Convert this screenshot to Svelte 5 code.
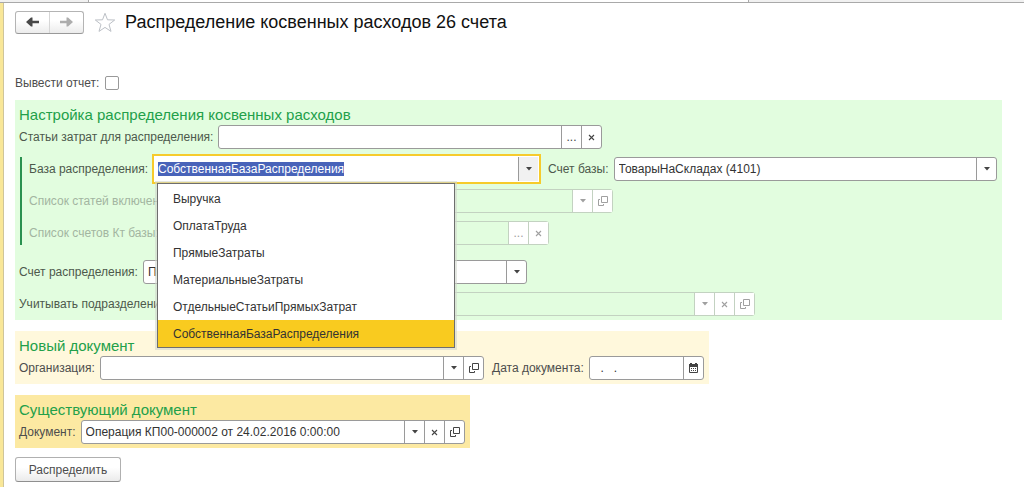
<script lang="ts">
  import { onMount } from "svelte";

  const bases: string[] = [
    "Выручка",
    "ОплатаТруда",
    "ПрямыеЗатраты",
    "МатериальныеЗатраты",
    "ОтдельныеСтатьиПрямыхЗатрат",
    "СобственнаяБазаРаспределения",
  ];

  let base = bases[5];
  let open = true;
  let showReport = false;
  let baseInput: HTMLInputElement;

  onMount(() => {
    baseInput.focus();
    baseInput.select();
  });

  function pick(value: string) {
    base = value;
    open = false;
  }
</script>

{#snippet arrow()}
  <svg width="6" height="4" viewBox="0 0 6 4"><path d="M0 0h6L3 3.5z" fill="currentColor" /></svg>
{/snippet}

{#snippet cross()}
  <svg width="7" height="7" viewBox="0 0 7 7">
    <path d="M1 1l5 5M6 1l-5 5" fill="none" stroke="currentColor" stroke-width="1.1" />
  </svg>
{/snippet}

{#snippet openIcon()}
  <svg width="10" height="10" viewBox="0 0 10 10">
    <path d="M3.5 0.5h6v6h-6zM2 3.5H0.5v6h5V8" fill="none" stroke="currentColor" />
  </svg>
{/snippet}

{#snippet button(kind: string, label: string, disabled = false)}
  <button type="button" class="side" aria-label={label} {disabled}>
    {#if kind === "arrow"}
      {@render arrow()}
    {:else if kind === "clear"}
      {@render cross()}
    {:else if kind === "open"}
      {@render openIcon()}
    {:else if kind === "calendar"}
      <svg width="9" height="10" viewBox="0 0 9 10">
        <path d="M0.5 1.5h8v8h-8z" fill="#fff" stroke="currentColor" />
        <path
          d="M0 1h9v3H0zM1 0h2v1H1zM6 0h2v1H6zM2 5h1v1H2zM4 5h1v1H4zM6 5h1v1H6zM2 7h1v1H2zM4 7h1v1H4zM6 7h1v1H6z"
          fill="currentColor"
        />
      </svg>
    {:else}
      ...
    {/if}
  </button>
{/snippet}

<div class="tabs">
  <span class="tab first"></span>
  <span class="tab current"></span>
  <span class="tab last"></span>
</div>

<main>
  <header>
    <div class="history">
      <button type="button" aria-label="Назад">
        <svg width="13" height="10" viewBox="0 0 13 10">
          <path d="M0 5L5 0.500h1.500V3.800H13v2.400H6.500v3.300H5z" fill="#484848" />
        </svg>
      </button>
      <button type="button" aria-label="Вперед">
        <svg width="13" height="10" viewBox="0 0 13 10">
          <path d="M13 5L8 0.500H6.500V3.800H0v2.400h6.500v3.300H8z" fill="#adadad" />
        </svg>
      </button>
    </div>
    <button type="button" class="star" aria-label="Избранное">
      <svg width="22" height="21" viewBox="0 0 22 21">
        <path
          d="M11 1.3l2.500 6.500 7.200.2-5.700 4.400 2 7L11 15.400 5 19.400l2-7L1.300 8l7.200-.2z"
          fill="#fff"
          stroke="#bcc0c6"
        />
      </svg>
    </button>
    <h1>Распределение косвенных расходов 26 счета</h1>
  </header>

  <div class="report">
    <label for="report">Вывести отчет:</label>
    <input id="report" type="checkbox" bind:checked={showReport} />
  </div>

  <section class="settings">
    <h2>Настройка распределения косвенных расходов</h2>
    <div class="row items">
      <label for="items">Статьи затрат для распределения:</label>
      <div class="field">
        <input id="items" type="text" />
        {@render button("more", "Выбрать")}
        {@render button("clear", "Очистить")}
      </div>
    </div>

    <div class="group">
      <div class="pair">
        <div class="row base">
          <label for="base">База распределения:</label>
          <div class="field focused">
            <input
              id="base"
              type="text"
              role="combobox"
              aria-expanded={open}
              aria-controls="base-list"
              autocomplete="off"
              bind:value={base}
              bind:this={baseInput}
            />
            <button type="button" class="side" aria-label="Открыть список" on:click={() => (open = !open)}>
              {@render arrow()}
            </button>
            {#if open}
              <div class="popup" id="base-list" role="listbox">
                {#each bases as item (item)}
                  <button
                    type="button"
                    role="option"
                    class:active={item === base}
                    aria-selected={item === base}
                    on:click={() => pick(item)}
                  >
                    {item}
                  </button>
                {/each}
              </div>
            {/if}
          </div>
        </div>
        <div class="row grow">
          <label for="base-account">Счет базы:</label>
          <div class="field">
            <select id="base-account">
              <option>ТоварыНаСкладах (4101)</option>
            </select>
            <span class="side mark">{@render arrow()}</span>
          </div>
        </div>
      </div>
      <div class="row off included">
        <label for="included">Список статей включения:</label>
        <div class="field">
          <input id="included" type="text" disabled />
          {@render button("arrow", "Открыть список", true)}
          {@render button("open", "Открыть", true)}
        </div>
      </div>
      <div class="row off accounts">
        <label for="accounts">Список счетов Кт базы:</label>
        <div class="field">
          <input id="accounts" type="text" disabled />
          {@render button("more", "Выбрать", true)}
          {@render button("clear", "Очистить", true)}
        </div>
      </div>
    </div>

    <div class="row account">
      <label for="account">Счет распределения:</label>
      <div class="field">
        <select id="account">
          <option>Прочие</option>
        </select>
        <span class="side mark">{@render arrow()}</span>
      </div>
    </div>
    <div class="row half-off departments">
      <label for="departments">Учитывать подразделения:</label>
      <div class="field">
        <input id="departments" type="text" disabled />
        {@render button("arrow", "Открыть список", true)}
        {@render button("clear", "Очистить", true)}
        {@render button("open", "Открыть", true)}
      </div>
    </div>
  </section>

  <section class="new">
    <h2>Новый документ</h2>
    <div class="pair">
      <div class="row organization">
        <label for="organization">Организация:</label>
        <div class="field">
          <input id="organization" type="text" />
          {@render button("arrow", "Открыть список")}
          {@render button("open", "Открыть")}
        </div>
      </div>
      <div class="row grow">
        <label for="date">Дата документа:</label>
        <div class="field">
          <input id="date" type="text" value="&nbsp; .&nbsp; &nbsp;." />
          {@render button("calendar", "Календарь")}
        </div>
      </div>
    </div>
  </section>

  <section class="existing">
    <h2>Существующий документ</h2>
    <div class="row">
      <label for="document">Документ:</label>
      <div class="field">
        <input id="document" type="text" value="Операция КП00-000002 от 24.02.2016 0:00:00" />
        {@render button("arrow", "Открыть список")}
        {@render button("clear", "Очистить")}
        {@render button("open", "Открыть")}
      </div>
    </div>
  </section>

  <button type="button" class="submit">Распределить</button>
</main>

<style>
  :global(body) {
    background: #fff;
    font-family: "Liberation Sans", Arial, sans-serif;
    font-size: 12px;
    color: #4d4d4d;
  }

  button,
  input,
  select {
    box-sizing: border-box;
    margin: 0;
    font: inherit;
    color: inherit;
  }

  button {
    display: flex;
    align-items: center;
    justify-content: center;
    padding: 0;
    border: 0;
    background: none;
  }

  .tabs {
    display: flex;
    height: 2px;
    border-bottom: 1px solid #a9a9a9;
  }

  .tab {
    background: #f1f1f1;
  }

  .tab.first {
    width: 88px;
  }

  .tab.current {
    width: 659px;
    background: #fff;
    border: solid #a9a9a9;
    border-width: 0 1px;
  }

  .tab.last {
    flex: 1;
  }

  main {
    box-sizing: border-box;
    min-height: calc(100vh - 3px);
    padding: 7px 22px 5px 12px;
    border-left: 3px solid #f9e798;
    box-shadow: inset 1px 0 #cfc59a;
  }

  header {
    display: flex;
    align-items: center;
    height: 24px;
  }

  .history {
    display: flex;
    box-sizing: border-box;
    width: 69px;
    height: 23px;
    border: 1px solid #b4b4b4;
    border-bottom-color: #999;
    border-radius: 3px;
    background: linear-gradient(#fff 40%, #ececec);
  }

  .history button {
    flex: 1;
  }

  .history button + button {
    border-left: 1px solid #d6d6d6;
  }

  .star {
    margin: 0 9px 0 10px;
  }

  h1 {
    margin: 0;
    font-size: 18px;
    font-weight: 400;
    color: #111;
  }

  .report {
    display: flex;
    align-items: center;
    gap: 6px;
    height: 16px;
    margin: 41px 0 9px;
  }

  .report input {
    appearance: none;
    width: 14px;
    height: 14px;
    border: 1px solid #999;
    border-radius: 2px;
    background: #fff;
  }

  .report input:checked {
    background: #555;
  }

  section {
    box-sizing: border-box;
    padding: 5px 5px 4px 4px;
    margin-bottom: 11px;
  }

  .settings {
    display: flex;
    flex-direction: column;
    background: #e2fddf;
    color: #4d594c;
  }

  .new {
    width: 694px;
    background: #fff8dc;
  }

  .existing {
    width: 455px;
    margin-bottom: 9px;
    background: #fce9a2;
  }

  h2 {
    margin: 0;
    font-size: 15px;
    font-weight: 400;
    line-height: 20px;
    color: #22a04a;
  }

  .row {
    display: flex;
    align-items: center;
    gap: 5px;
    white-space: nowrap;
  }

  .pair {
    display: flex;
    gap: 8px;
  }

  .grow {
    flex: 1;
    min-width: 0;
  }

  .items {
    width: 583px;
  }

  .group {
    display: flex;
    flex-direction: column;
    gap: 8px;
    margin: 8px 0 15px 1px;
    padding-left: 7px;
    border-left: 2px solid #2a9150;
  }

  .base {
    flex: none;
    width: 511px;
  }

  .included {
    width: 584px;
  }

  .accounts {
    width: 520px;
  }

  .account {
    width: 508px;
    margin-bottom: 8px;
  }

  .departments {
    width: 736px;
  }

  .organization {
    flex: none;
    width: 465px;
  }

  .field {
    position: relative;
    display: flex;
    flex: 1;
    min-width: 0;
    box-sizing: border-box;
    height: 24px;
    border: 1px solid #9a9a9a;
    border-radius: 3px;
    background: #fff;
    color: #333;
  }

  .field input,
  .field select {
    flex: 1;
    min-width: 0;
    padding: 0 4px;
    border: 0;
    outline: 0;
    background: none;
    appearance: none;
  }

  .field select {
    margin-right: -20px;
    padding-right: 20px;
  }

  .side {
    flex: none;
    box-sizing: border-box;
    width: 20px;
    border-left: 1px solid #9a9a9a;
    color: #444;
  }

  .mark {
    display: flex;
    align-items: center;
    justify-content: center;
    pointer-events: none;
  }

  .focused {
    margin: 0 2px;
    border: 0;
    border-radius: 0;
    box-shadow:
      0 0 0 1px #fff,
      0 0 0 3px #f6cb2c;
  }

  .focused input {
    padding: 0 3px;
  }

  .focused input::selection {
    background: #4863b9;
    color: #fff;
  }

  .focused .side {
    background: #f1f1f1;
  }

  .off {
    color: #a3b5a1;
  }

  .off .field,
  .half-off .field {
    border-color: #c3d2c1;
    background: none;
  }

  .off .side,
  .half-off .side {
    border-color: #c3d2c1;
    background: #fff;
    color: #a0a0a0;
  }

  .popup {
    position: absolute;
    z-index: 1;
    top: 26px;
    left: 2px;
    box-sizing: border-box;
    width: 298px;
    padding-top: 1px;
    border: 1px solid #6e6e6e;
    background: #fff;
    box-shadow: 0 0 0 2px rgba(210, 215, 205, 0.6);
  }

  .popup button {
    justify-content: flex-start;
    width: 100%;
    height: 27px;
    padding-left: 15px;
  }

  .popup .active {
    background: #f9cb1f;
  }

  .submit {
    width: 106px;
    height: 25px;
    border: 1px solid #b0b0b0;
    border-bottom-color: #8f8f8f;
    border-radius: 3px;
    background: linear-gradient(#fff 40%, #ebebeb);
  }
</style>
